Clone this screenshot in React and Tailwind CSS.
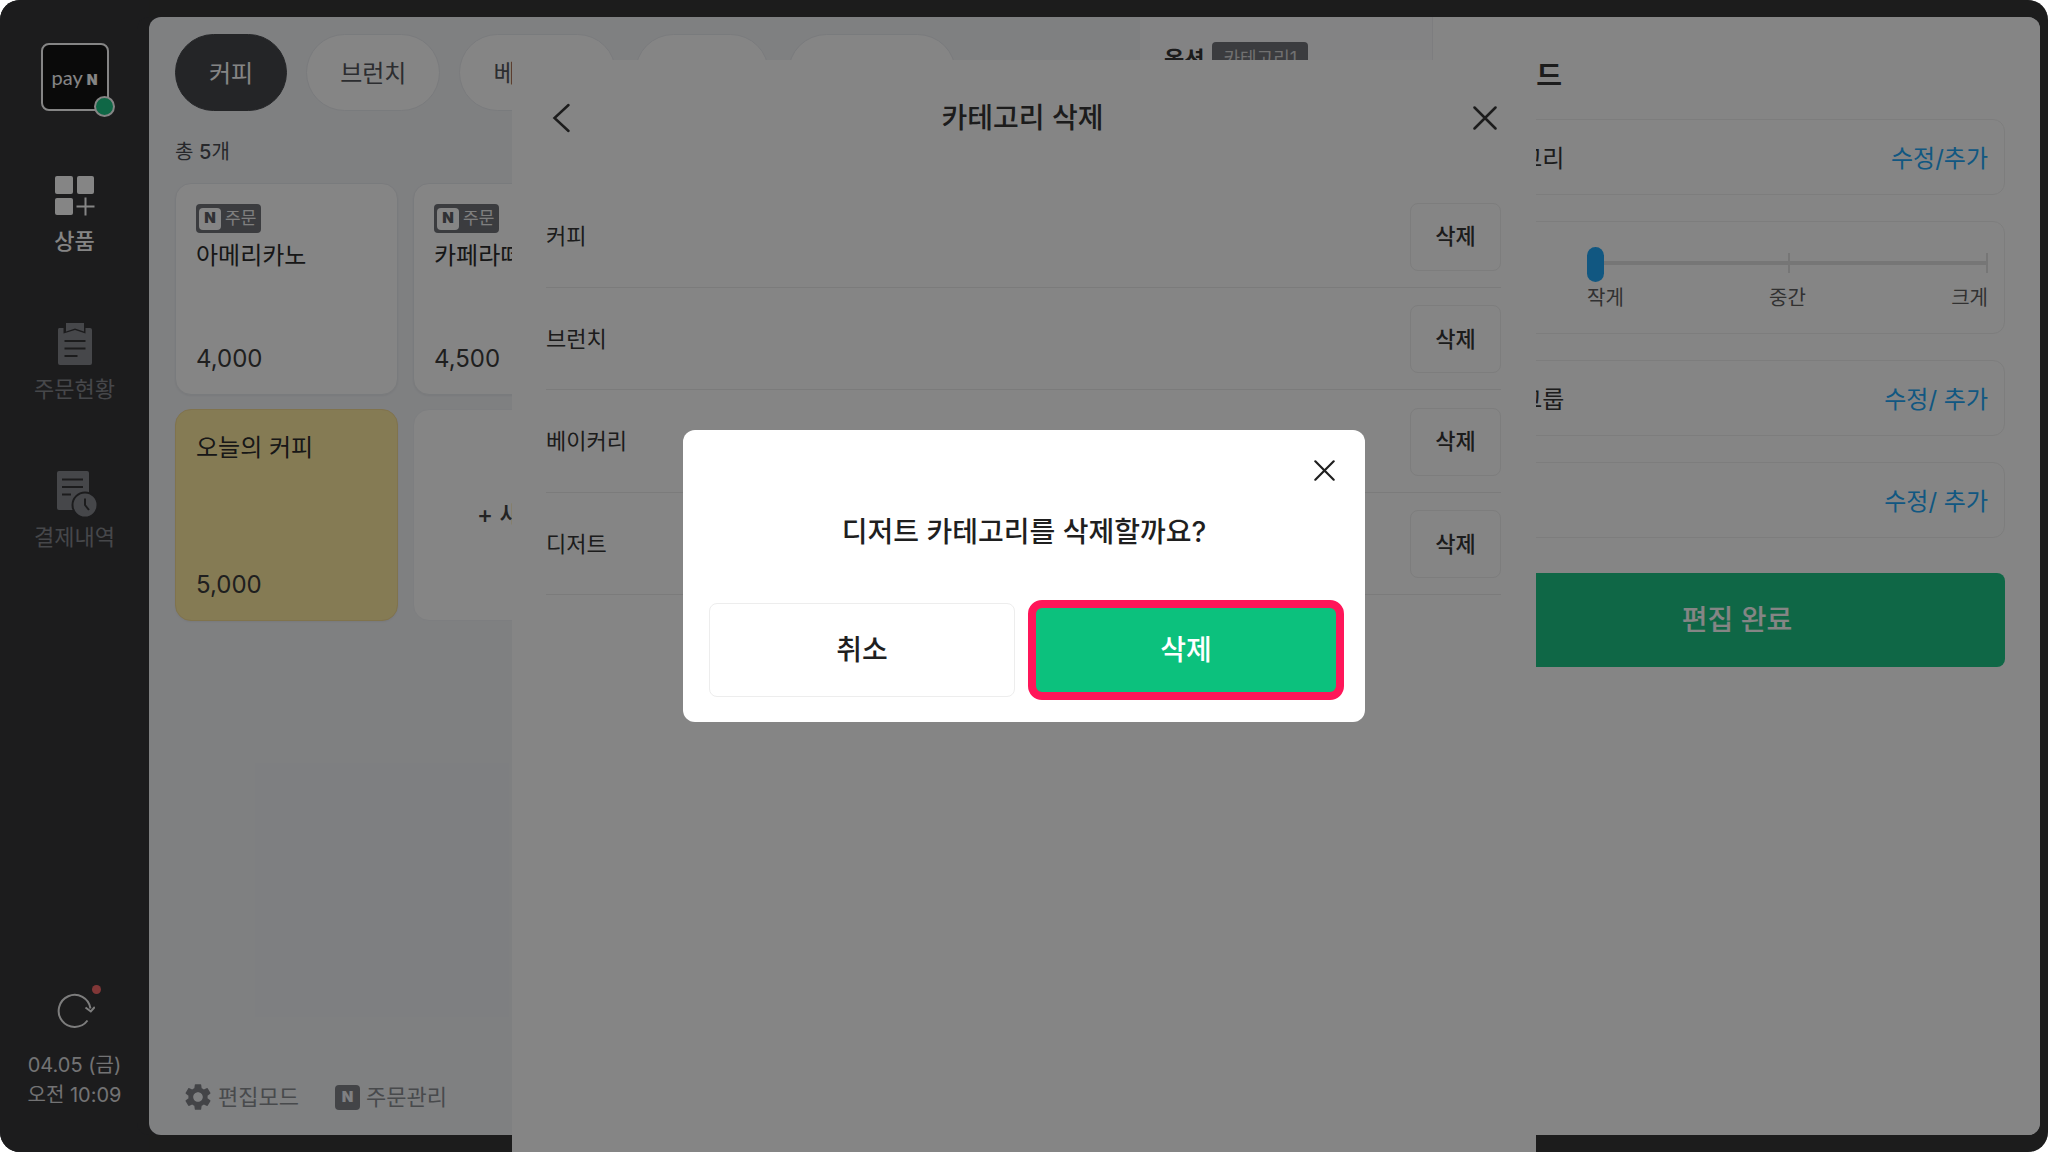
import { MdSettings } from "react-icons/md";

const categories = ["커피", "브런치", "베이커리", "디저트"];

const products = [
  { name: "아메리카노", price: "4,000", order: true },
  { name: "카페라떼", price: "4,500", order: true },
  { name: "오늘의 커피", price: "5,000", highlight: true },
];

const iconProps = { fill: "none", "aria-hidden": true };

function GridIcon() {
  return (
    <svg width="40" height="40" viewBox="0 0 40 40" {...iconProps}>
      <rect x="0" y="0" width="18" height="18" rx="2" fill="currentColor" />
      <rect x="22" y="0" width="17" height="18" rx="2" fill="currentColor" />
      <rect x="0" y="22" width="18" height="17" rx="2" fill="currentColor" />
      <path d="M30.500 21.500v18M21.500 30.500h18" stroke="currentColor" strokeWidth="2" />
    </svg>
  );
}

function ClipboardIcon() {
  return (
    <svg width="36" height="44" viewBox="0 0 36 44" {...iconProps}>
      <path
        d="M2 6h4.500v5.500L18 8l10.500 3.500V6H33a2 2 0 0 1 2 2v33a2 2 0 0 1-2 2H3a2 2 0 0 1-2-2V8a2 2 0 0 1 1-2z"
        fill="currentColor"
      />
      <path d="M9 1h18v8.500L18 6.500 9 9.500z" fill="currentColor" />
      <path d="M7.500 19h21M7.500 26.500h21M7.500 34h13" stroke="#363639" strokeWidth="2" />
    </svg>
  );
}

function ReceiptIcon() {
  return (
    <svg width="47" height="52" viewBox="-5 -4 47 52" {...iconProps}>
      <rect x="1" y="1" width="32" height="39" rx="2" fill="currentColor" />
      <path d="M6 9.500h21M6 17h21M6 24.500h9" stroke="#363639" strokeWidth="2" />
      <circle cx="29" cy="35" r="12.500" fill="currentColor" stroke="#363639" strokeWidth="2" />
      <path d="M29 28.500v6.500l4 5" stroke="#363639" strokeWidth="2" />
    </svg>
  );
}

function RefreshIcon() {
  return (
    <svg width="40" height="36" viewBox="0 0 40 36" {...iconProps}>
      <path
        d="M32.500 27.500A16 16 0 1 1 35.500 15.500M30.500 14.500l5.300 4 4-4.500"
        stroke="currentColor"
        strokeWidth="2"
      />
    </svg>
  );
}

function CloseIcon({ size = 24 }) {
  return (
    <svg width={size} height={size} viewBox="0 0 24 24" {...iconProps}>
      <path d="M1.500 1.500l21 21M22.500 1.500l-21 21" stroke="currentColor" strokeWidth="2.500" strokeLinecap="round" />
    </svg>
  );
}

function NavItem({ icon, label, active }) {
  return (
    <a
      href="#"
      className={`flex h-[98px] flex-col items-center justify-end gap-[5px] text-[22px] leading-8 ${
        active ? "font-medium text-white" : "text-[#86888e]"
      }`}
    >
      <span className="flex h-12 items-center">{icon}</span>
      {label}
    </a>
  );
}

function Sidebar() {
  return (
    <aside className="flex w-[149px] shrink-0 flex-col items-center bg-[#363639] pt-[43px] pb-[42px]">
      <div className="relative flex size-[68px] items-center justify-center rounded-lg border-2 border-white bg-[#141414] text-white">
        <span className="flex items-baseline gap-1 font-[Lato] text-xl leading-6">
          pay <b className="font-[Inter] text-sm font-black">N</b>
        </span>
        <span className="absolute -right-2 -bottom-2 size-[21px] rounded-full border-2 border-white bg-[#1ec686]" />
      </div>

      <nav className="mt-12 flex flex-col gap-[50px]">
        <NavItem icon={<GridIcon />} label="상품" active />
        <NavItem icon={<ClipboardIcon />} label="주문현황" />
        <NavItem icon={<ReceiptIcon />} label="결제내역" />
      </nav>

      <button type="button" aria-label="새로고침" className="relative mt-auto text-[#f0f0f0]">
        <RefreshIcon />
        <span className="absolute -top-2 -right-1.5 size-[9px] rounded-full bg-[#f86a6a]" />
      </button>
      <p className="mt-[21px] text-center text-xl leading-[30px] text-[#dcdcde]">
        04.05 (금)
        <br />
        오전 10:09
      </p>
    </aside>
  );
}

function ProductCard({ product }) {
  return (
    <li
      className={`flex h-[212px] flex-col rounded-2xl border px-5 pt-5 pb-[19px] shadow-xs ${
        product.highlight ? "border-[#f5dc94] bg-[#ffeba2]" : "border-[#e9ebef] bg-white"
      }`}
    >
      {product.order && (
        <span className="flex h-[29px] w-[65px] items-center gap-1 rounded bg-[#717379] pl-[3px] text-[17px] text-[#f4f4f4]">
          <b className="flex size-[22px] items-center justify-center rounded-sm bg-white font-[Inter] text-[15px] font-black text-[#5c5e64]">
            N
          </b>
          주문
        </span>
      )}
      <span
        className={`text-2xl leading-9 text-[#2c2c2c] ${product.order ? "mt-[5px]" : ""}`}
      >
        {product.name}
      </span>
      <span className="mt-auto text-2xl leading-8 text-[#3c3c3c]">{product.price}</span>
    </li>
  );
}

function ProductArea() {
  return (
    <section className="flex min-w-0 flex-1 flex-col pt-[17px] pb-[22px] pl-[26px]">
      <div className="flex gap-[19px]">
        {categories.map((name, i) => (
          <button
            key={name}
            type="button"
            className={`h-[77px] shrink-0 rounded-full border px-[33px] pt-0.5 text-2xl ${
              i === 0
                ? "border-[#46484c] bg-[#46484c] text-white"
                : "border-[#e9ebef] bg-white text-[#55575c]"
            }`}
          >
            {name}
          </button>
        ))}
        <button
          type="button"
          className="h-[77px] w-[168px] shrink-0 rounded-full border border-[#e9ebef] bg-white text-2xl text-[#55575c]"
        >
          음료
        </button>
      </div>
      <p className="mt-[25px] text-xl leading-8 text-[#4c4e53]">
        총 <b className="font-medium">5</b>개
      </p>
      <ul className="mt-[15px] grid grid-cols-[repeat(2,223px)] gap-x-[15px] gap-y-3.5">
        {products.map((product) => (
          <ProductCard key={product.name} product={product} />
        ))}
        <li className="h-[212px] rounded-2xl border border-[#f0f2f5] bg-white">
          <button type="button" className="size-full text-2xl font-medium text-[#444]">
            + 새 상품
          </button>
        </li>
      </ul>
      <div className="mt-auto flex gap-9 pl-[7px] text-[22px] leading-8 text-[#8b8e93]">
        <button type="button" className="flex items-center gap-1">
          <MdSettings className="size-8 text-[#808288]" />
          편집모드
        </button>
        <button type="button" className="flex items-center gap-1.5">
          <b className="flex size-[25px] items-center justify-center rounded-sm bg-[#808288] font-[Inter] text-[15px] font-black text-[#f4f6f9]">
            N
          </b>
          주문관리
        </button>
      </div>
    </section>
  );
}

function OptionArea() {
  return (
    <section className="w-[293px] shrink-0 border-r border-[#eff0f3] bg-[#fbfbfe] px-6 pt-[25px]">
      <div className="flex h-[34px] items-center gap-2">
        <h2 className="text-[22px] font-semibold text-[#363636]">옵션</h2>
        <span className="flex h-full items-center rounded bg-[#717379] px-[11px] text-lg text-[#d8d8d8]">
          카테고리1
        </span>
      </div>
    </section>
  );
}

function EditRow({ label, action }) {
  return (
    <div className="flex h-[76px] items-center justify-between rounded-xl border border-[#f0f0f0] px-4 pt-[3px] text-2xl">
      <span className="text-[#363636]">{label}</span>
      <button type="button" className="text-[#22a8f8]">
        {action}
      </button>
    </div>
  );
}

function SizeSlider() {
  return (
    <div className="flex h-[113px] items-start justify-between rounded-xl border border-[#f0f0f0] px-4 pt-[25px]">
      <label htmlFor="size" className="text-2xl text-[#363636]">
        크기
      </label>
      <div className="w-[401px]">
        <div className="relative flex h-[35px] items-center">
          <span className="absolute top-1.5 left-1/2 h-5 w-0.5 bg-[#e2e2e2]" />
          <span className="absolute top-1.5 right-0 h-5 w-0.5 bg-[#e2e2e2]" />
          <span className="absolute inset-x-0 top-[14px] h-1 bg-[#e2e2e2]" />
          <input
            id="size"
            type="range"
            min="0"
            max="2"
            defaultValue="0"
            className="relative h-[35px] w-full appearance-none bg-transparent [&::-webkit-slider-thumb]:h-[35px] [&::-webkit-slider-thumb]:w-[17px] [&::-webkit-slider-thumb]:appearance-none [&::-webkit-slider-thumb]:rounded-full [&::-webkit-slider-thumb]:bg-[#22a8f8]"
          />
        </div>
        <div className="mt-1 flex justify-between text-xl leading-6 text-[#5e5e60]">
          <span>작게</span>
          <span>중간</span>
          <span>크게</span>
        </div>
      </div>
    </div>
  );
}

function EditPanel() {
  return (
    <section className="flex w-[607px] shrink-0 flex-col gap-[26px] bg-white pt-[43px] pr-[35px] pb-9 pl-[26px]">
      <h2 className="h-[33px] text-[28px] leading-[33px] font-semibold text-[#363636]">편집모드</h2>
      <EditRow label="카테고리" action="수정/추가" />
      <SizeSlider />
      <EditRow label="옵션그룹" action="수정/ 추가" />
      <EditRow label="할인" action="수정/ 추가" />
      <button
        type="button"
        className="mt-[9px] ml-2.5 h-[94px] rounded-lg bg-[#1ec686] text-[28px] font-medium text-white"
      >
        편집 완료
      </button>
    </section>
  );
}

function CategorySheet() {
  return (
    <section className="absolute top-[60px] bottom-0 left-1/4 w-1/2 bg-white pr-[35px] pl-[34px] text-[#363636]">
      <header className="flex h-[115px] items-center justify-between pr-1 pl-1.5">
        <button type="button" aria-label="뒤로">
          <svg width="20" height="30" viewBox="0 0 20 30" {...iconProps}>
            <path d="M16.500 2L2.500 15l14 13" stroke="currentColor" strokeWidth="2.500" strokeLinecap="round" />
          </svg>
        </button>
        <h1 className="text-[28px] font-medium">카테고리 삭제</h1>
        <button type="button" aria-label="닫기">
          <CloseIcon />
        </button>
      </header>
      <ul className="mt-2.5 grid h-[410px] grid-rows-4">
        {categories.map((name) => (
          <li
            key={name}
            className="flex items-center justify-between border-b border-[#ebebeb] pt-0.5 text-[22px]"
          >
            {name}
            <button
              type="button"
              className="h-[68px] w-[91px] rounded-lg border border-[#efefef] font-medium"
            >
              삭제
            </button>
          </li>
        ))}
      </ul>
    </section>
  );
}

function ConfirmDialog() {
  return (
    <div className="absolute inset-0 flex items-center justify-center bg-black/48">
      <div
        role="dialog"
        aria-labelledby="confirm-title"
        className="flex h-[292px] w-[682px] flex-col rounded-xl bg-white px-[26px] pt-[30px] pb-[25px] text-[#1f1f1f]"
      >
        <button type="button" aria-label="닫기" className="mr-1 self-end">
          <CloseIcon size={21} />
        </button>
        <h2 id="confirm-title" className="mt-[31px] text-center text-[28px] leading-10 font-medium">
          디저트 카테고리를 삭제할까요?
        </h2>
        <div className="mt-auto grid grid-cols-2 gap-[18px] text-[28px] font-medium">
          <button type="button" className="h-[94px] rounded-lg border border-[#ededed]">
            취소
          </button>
          <button type="button" className="relative h-[94px] rounded-lg bg-[#0cc17d] text-white">
            삭제
            <span className="absolute -inset-x-[5px] -inset-y-[3px] rounded-[14px] border-8 border-[#ff1659]" />
          </button>
        </div>
      </div>
    </div>
  );
}

export default function App() {
  return (
    <div className="relative flex min-h-screen overflow-hidden rounded-[20px] bg-[#363636] font-[Inter,'Noto_Sans_CJK_KR',sans-serif]">
      <Sidebar />
      <main className="my-[17px] mr-2 flex min-w-0 flex-1 overflow-hidden rounded-xl bg-[#f3f5f8] shadow-[-12px_0_0_#363639]">
        <ProductArea />
        <OptionArea />
        <EditPanel />
      </main>
      <CategorySheet />
      <ConfirmDialog />
    </div>
  );
}
